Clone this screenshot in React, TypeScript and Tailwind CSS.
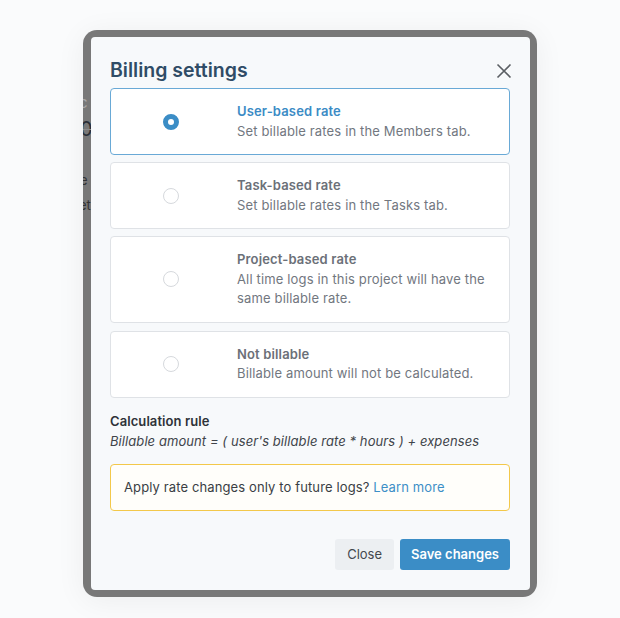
import React from "react";

function Radio({ checked }: { checked: boolean }) {
  return checked ? (
    <span className="block w-4 h-4 rounded-full border-[5px] border-[#3b8dc6] bg-white" />
  ) : (
    <span className="block w-4 h-4 rounded-full border border-[#d6d9dd] bg-white" />
  );
}

function Option({
  checked,
  title,
  desc,
}: {
  checked: boolean;
  title: string;
  desc: React.ReactNode;
}) {
  return (
    <div
      className={
        "flex items-center rounded-[4px] border bg-white py-[13px] " +
        (checked ? "border-[#69a9d6]" : "border-[#dfe2e6]")
      }
    >
      <div className="w-[119px] shrink-0 flex justify-center">
        <Radio checked={checked} />
      </div>
      <div className="pl-[7px] pr-4 text-[13px] leading-[19.5px] tracking-[0.15px]">
        <div
          className={
            "font-semibold " + (checked ? "text-[#3b8bc5]" : "text-[#6b7078]")
          }
        >
          {title}
        </div>
        <div className="text-[#72777f]">{desc}</div>
      </div>
    </div>
  );
}

export default function App() {
  return (
    <div
      className="min-h-[618px] w-[620px] bg-[#fafbfc] pt-[30px] pl-[83px]"
      style={{ fontFamily: "Inter, 'Noto Sans', sans-serif" }}
    >
      <div className="relative w-[454px] h-[567px] rounded-[14px] bg-[#787878] overflow-hidden pt-[7px] pl-[8px] shadow-[0_4px_30px_rgba(0,0,0,0.06)]">
        <div className="absolute left-[-4px] top-[62px] text-[15px] text-[#a8a8a8]">c</div>
        <div className="absolute left-[-3px] top-[84px] text-[20px] text-[#2a2f36]">0</div>
        <div className="absolute left-0 top-[99px] w-[10px] h-px bg-[#8a8a8a]" />
        <div className="absolute left-[-3px] top-[141px] text-[13px] text-[#333]">e</div>
        <div className="absolute left-[-4px] top-[166px] text-[13px] text-[#333]">et</div>

        <div className="relative w-[439px] h-[553px] rounded-[4px] bg-[#f7f9fb] pl-[19px] pr-[20px] pt-[19px]">
          <div className="flex items-center justify-between">
            <h2 className="text-[19.5px] leading-[28px] font-semibold text-[#2f4c66]">
              Billing settings
            </h2>
            <svg width="16" height="16" viewBox="0 0 16 16" className="mt-[1px] mr-[-2px]">
              <path
                d="M1.5 1.5 L14.5 14.5 M14.5 1.5 L1.5 14.5"
                stroke="#5b5f64"
                strokeWidth="1.6"
                fill="none"
              />
            </svg>
          </div>

          <div className="mt-[4px] flex flex-col gap-[7px]">
            <Option
              checked
              title="User-based rate"
              desc="Set billable rates in the Members tab."
            />
            <Option
              checked={false}
              title="Task-based rate"
              desc="Set billable rates in the Tasks tab."
            />
            <Option
              checked={false}
              title="Project-based rate"
              desc={
                <>
                  All time logs in this project will have the
                  <br />
                  same billable rate.
                </>
              }
            />
            <div className="mt-[1px]">
              <Option
                checked={false}
                title="Not billable"
                desc="Billable amount will not be calculated."
              />
            </div>
          </div>

          <div className="mt-[13px] text-[13px] leading-[20px] tracking-[0.08px]">
            <div className="font-semibold text-[#2e3238]">Calculation rule</div>
            <div className="italic text-[#40444a]">
              Billable amount = ( user's billable rate * hours ) + expenses
            </div>
          </div>

          <div className="mt-[13px] rounded-[4px] border border-[#f3c84a] bg-[#fffefa] px-[13px] py-[13px] text-[13px] leading-[19.5px] tracking-[0.12px] text-[#3a3e44]">
            Apply rate changes only to future logs?{" "}
            <span className="text-[#3d8fc7]">Learn more</span>
          </div>

          <div className="mt-[28px] flex justify-end gap-[6px]">
            <button className="h-[31px] rounded-[3px] bg-[#eceff2] px-[12px] text-[13px] text-[#44484e]">
              Close
            </button>
            <button className="h-[31px] rounded-[3px] bg-[#3b8dc6] px-[11px] text-[13px] font-semibold text-white">
              Save changes
            </button>
          </div>
        </div>
      </div>
    </div>
  );
}
